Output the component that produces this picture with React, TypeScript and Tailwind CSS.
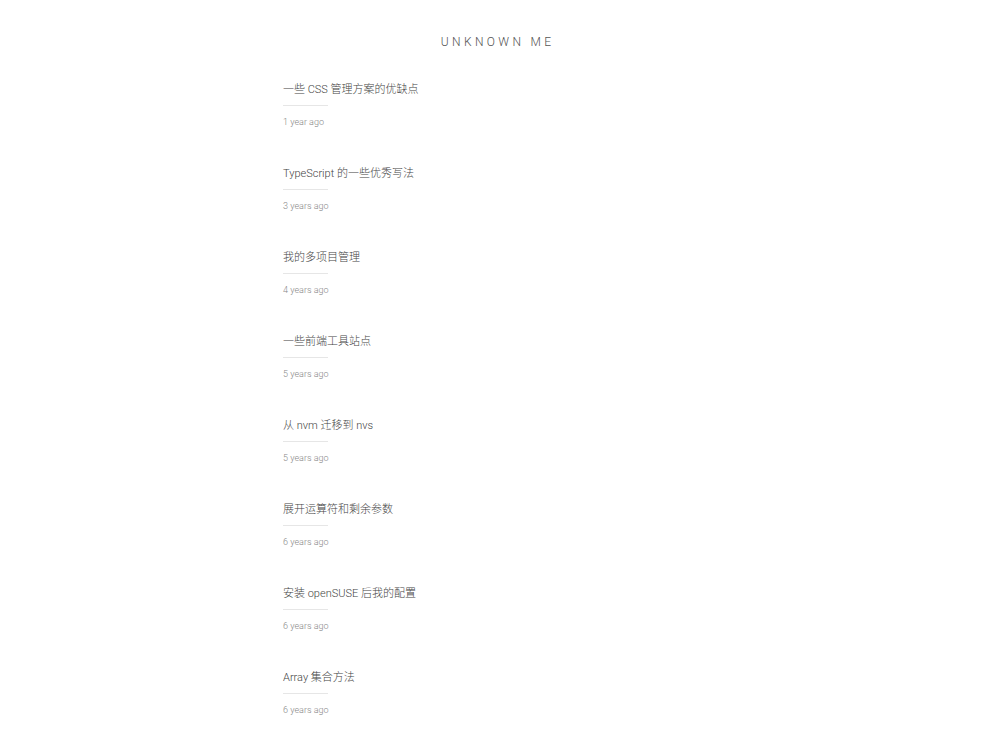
const posts = [
  { title: '一些 CSS 管理方案的优缺点', date: '1 year ago' },
  { title: 'TypeScript 的一些优秀写法', date: '3 years ago' },
  { title: '我的多项目管理', date: '4 years ago' },
  { title: '一些前端工具站点', date: '5 years ago' },
  { title: '从 nvm 迁移到 nvs', date: '5 years ago' },
  { title: '展开运算符和剩余参数', date: '6 years ago' },
  { title: '安装 openSUSE 后我的配置', date: '6 years ago' },
  { title: 'Array 集合方法', date: '6 years ago' },
];

export default function App() {
  return (
    <div className="min-h-screen bg-white font-['Roboto','Noto_Sans_CJK_SC',sans-serif] font-light">
      <header className="pt-[32px] text-center">
        <h1 className="text-[12px] leading-[20px] tracking-[0.28em] pl-[0.28em] text-[#555]">UNKNOWN ME</h1>
      </header>
      <main className="mx-auto w-[426px] pt-[30px]">
        <ul className="flex flex-col gap-[37px]">
          {posts.map((p) => (
            <li key={p.title}>
              <a className="block text-[11px] leading-[16px] text-[#444]">{p.title}</a>
              <div className="mt-[7px] h-px w-[45px] bg-[#e6e6e6]" />
              <div className="mt-[9px] text-[9px] leading-[14px] text-[#888]">{p.date}</div>
            </li>
          ))}
        </ul>
      </main>
    </div>
  );
}
